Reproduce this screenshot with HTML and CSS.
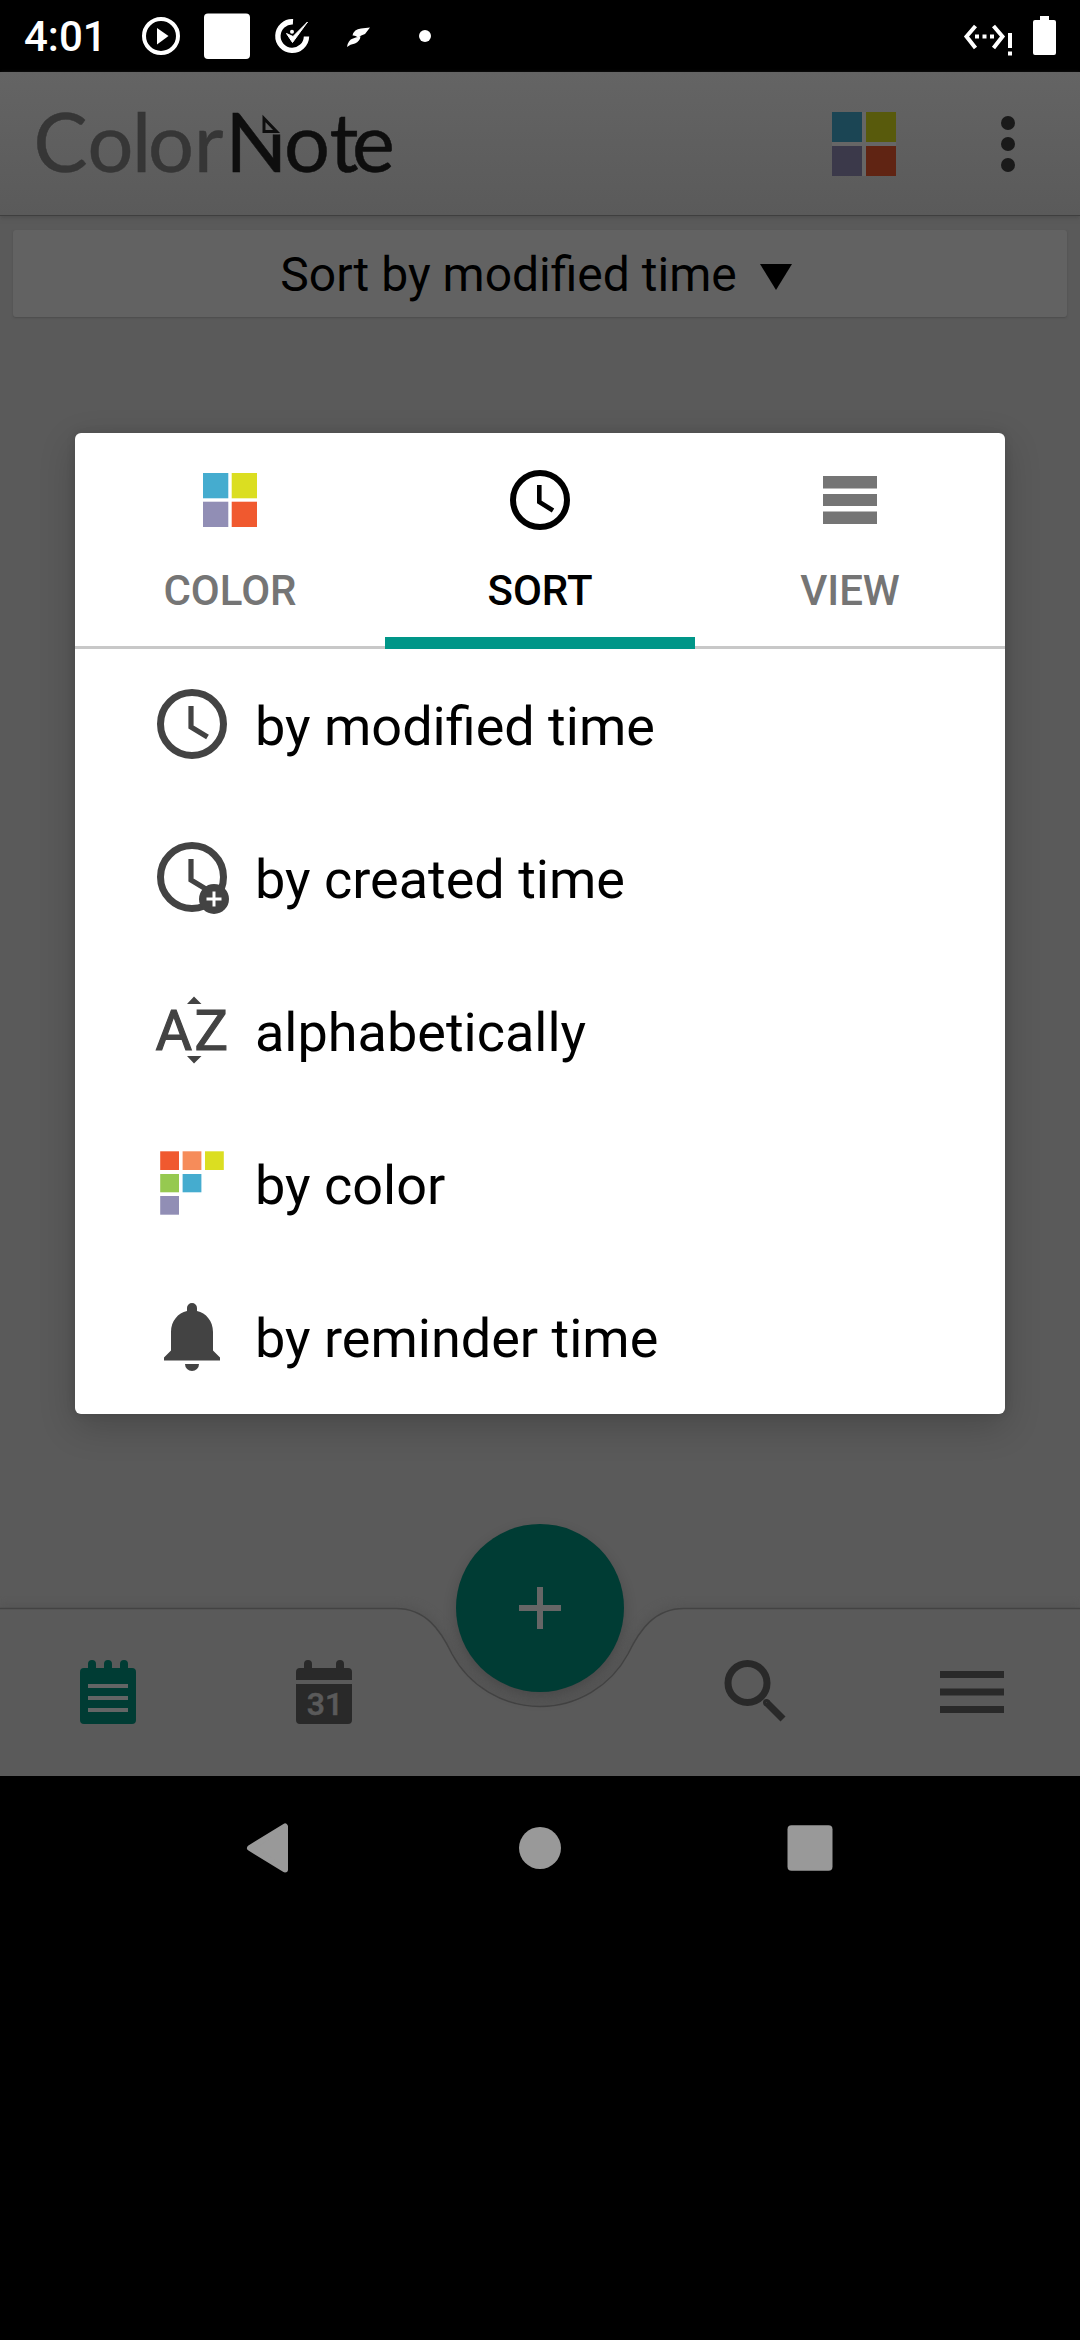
FILE: index.html
```html
<!DOCTYPE html>
<html lang="en">
<head>
<meta charset="utf-8">
<title>ColorNote</title>
<link rel="stylesheet" href="styles.css">
</head>
<body>
<div class="screen">
  <header class="status">
    <span class="clock">4:01</span>
    <svg class="status-left" width="296" height="72" viewBox="140 0 296 72">
      <circle cx="161" cy="36" r="17" fill="none" stroke="#fff" stroke-width="4"/>
      <path d="M157 28 L168.500 36 L157 44.500 Z" fill="#fff"/>
      <rect x="204" y="13.500" width="46" height="45.500" rx="4" fill="#fff"/>
      <path d="M293 21.800 A14.300 14.300 0 1 0 306.500 36.500" fill="none" stroke="#fff" stroke-width="5.400" stroke-linecap="butt"/>
      <path d="M286.500 33.500 L292.500 42.500 L307.500 22 L293 36.500 Z" fill="#fff" stroke="#fff" stroke-width="1"/>
      <circle cx="292" cy="31.700" r="2" fill="#fff"/>
      <path d="M352.500 35.500 Q354 29 361 28.500 L370 27.500 L365 34 Q361 35 358 37.500 Q355 35 352.500 35.500 Z M347 47 Q348 40 353 38.500 Q356 37 360.500 36.500 Q360 41 355 43.500 Q350 44 347 47 Z" fill="#fff"/>
      <circle cx="425" cy="36" r="6" fill="#fff"/>
    </svg>
    <svg class="status-right" width="96" height="72" viewBox="962 0 96 72">
      <path d="M975.500 26 L966.500 36.500 L975.500 48 M993.500 26 L1002.500 36.500 L993.500 48" fill="none" stroke="#fff" stroke-width="4"/>
      <path d="M975 34.500h4v4h-4z M982.500 34.500h4v4h-4z M990 34.500h4v4h-4z M1008 33h4v15h-4z M1008 51.500h4v4h-4z" fill="#fff"/>
      <path d="M1040 16 h9 v4 h5 q2 0 2 2 v31 q0 2 -2 2 h-19 q-2 0 -2 -2 v-31 q0 -2 2 -2 h5 Z" fill="#fff"/>
    </svg>
  </header>

  <main class="app">
    <div class="appbar">
      <svg class="logo" width="390" height="130" viewBox="22 79 390 130">
        <defs>
          <clipPath id="stem"><path d="M220 79 H262 V134.500 H300 V209 H220 Z"/></clipPath>
        </defs>
        <text class="logo-light" x="33.500 87.500 132 148 194" y="172">Color</text>
        <text class="logo-dark" x="225.500" y="172" clip-path="url(#stem)">N</text>
        <text class="logo-dark" x="284 329.500 352" y="172">ote</text>
        <path d="M264 118.500 V131.500 H276.500 Z" fill="none" stroke="#0e0e0e" stroke-width="3"/>
      </svg>
      <svg class="palette" width="64" height="64" viewBox="0 0 64 64">
        <rect width="64" height="64" fill="#666"/>
        <rect width="30" height="30" fill="#1b4554"/>
        <rect x="34" width="30" height="30" fill="#585a0c"/>
        <rect y="34" width="30" height="30" fill="#3b394a"/>
        <rect x="34" y="34" width="30" height="30" fill="#602413"/>
      </svg>
      <svg class="more" width="16" height="60" viewBox="0 0 16 60" fill="#1a1a1a">
        <circle cx="8" cy="9" r="7"/><circle cx="8" cy="30" r="7"/><circle cx="8" cy="51" r="7"/>
      </svg>
    </div>

    <div class="sortbar">
      <span>Sort by modified time</span>
      <svg width="32" height="26" viewBox="0 0 32 26"><path d="M0 0 H32 L16 26 Z"/></svg>
    </div>

    <nav class="bottombar">
      <svg class="notch" width="1080" height="180" viewBox="0 0 1080 180">
        <path class="notch-glow" d="M0 12.500 H396 C425 12.500 440 33 452 58 A100 100 0 0 0 628 58 C640 33 655 12.500 684 12.500 H1080"/>
        <path class="notch-fill" d="M0 12.500 H396 C425 12.500 440 33 452 58 A100 100 0 0 0 628 58 C640 33 655 12.500 684 12.500 H1080 V180 H0 Z"/>
        <path class="notch-line" d="M0 12.500 H396 C425 12.500 440 33 452 58 A100 100 0 0 0 628 58 C640 33 655 12.500 684 12.500 H1080"/>
      </svg>
      <svg width="56" height="64" viewBox="0 0 56 64">
        <path d="M8 8 V4 a4 4 0 0 1 8 0 V8 H24 V4 a4 4 0 0 1 8 0 V8 H40 V4 a4 4 0 0 1 8 0 V8 H52 a4 4 0 0 1 4 4 V60 a4 4 0 0 1 -4 4 H4 a4 4 0 0 1 -4 -4 V12 a4 4 0 0 1 4 -4 Z" fill="#003c34"/>
        <path d="M8 24h40v4H8z M8 36h40v4H8z M8 48h40v4H8z" fill="#636565"/>
      </svg>
      <svg width="56" height="64" viewBox="0 0 56 64">
        <path d="M8 8 V4 a4 4 0 0 1 8 0 V8 H40 V4 a4 4 0 0 1 8 0 V8 H52 a4 4 0 0 1 4 4 V20 H0 V12 a4 4 0 0 1 4 -4 Z M0 24 H56 V60 a4 4 0 0 1 -4 4 H4 a4 4 0 0 1 -4 -4 Z" fill="#292929"/>
        <text class="day" x="29" y="55">31</text>
      </svg>
      <div class="fab">
        <svg width="42" height="42" viewBox="0 0 42 42"><path d="M18 0h6v18h18v6H24v18h-6V24H0v-6h18z" fill="#666"/></svg>
      </div>
      <svg width="64" height="64" viewBox="0 0 64 64" fill="none" stroke="#292929">
        <circle cx="23.500" cy="23" r="19.500" stroke-width="7"/>
        <path d="M42.500 42.500 L59 59" stroke-width="7"/>
        <circle cx="42.500" cy="42.500" r="1.500" stroke-width="4"/>
      </svg>
      <svg width="64" height="64" viewBox="0 0 64 64"><path d="M0 11h64v7H0z M0 28.500h64v7H0z M0 46h64v7H0z" fill="#292929"/></svg>
    </nav>

    <section class="dialog">
      <div class="tabs">
        <div class="tab">
          <svg width="60" height="60" viewBox="0 0 60 60">
            <path d="M3 3h25.300v25.300H3z" fill="#45accf"/><path d="M31.700 3H57v25.300H31.700z" fill="#dbde21"/>
            <path d="M3 31.700h25.300V57H3z" fill="#918eb5"/><path d="M31.700 31.700H57V57H31.700z" fill="#f0592f"/>
          </svg>
          <span>COLOR</span>
        </div>
        <div class="tab active">
          <svg width="60" height="60" viewBox="0 0 60 60" fill="none" stroke="#000">
            <circle cx="30" cy="30" r="27" stroke-width="6"/>
            <path d="M29.300 15 V32 L43 40.500" stroke-width="4.600"/>
          </svg>
          <span>SORT</span>
        </div>
        <div class="tab">
          <svg width="60" height="60" viewBox="0 0 60 60"><path d="M3 6h54v12.500H3z M3 24h54v12H3z M3 41.500h54V54H3z" fill="#757575"/></svg>
          <span>VIEW</span>
        </div>
      </div>
      <ul class="options">
        <li>
          <svg width="76" height="76" viewBox="0 0 76 76" fill="none" stroke="#434343">
            <circle cx="38" cy="38" r="31.500" stroke-width="7"/><path d="M37 20 V41 L53.500 51" stroke-width="5.200"/>
          </svg>
          <span>by modified time</span>
        </li>
        <li>
          <svg width="76" height="76" viewBox="0 0 76 76" fill="none" stroke="#434343">
            <circle cx="38" cy="38" r="31.500" stroke-width="7"/><path d="M37 20 V41 L53.500 51" stroke-width="5.200"/>
            <circle cx="60" cy="60" r="15" fill="#434343" stroke="none"/>
            <path d="M60 52.500 V67.500 M52.500 60 H67.500" stroke="#fff" stroke-width="3"/>
          </svg>
          <span>by created time</span>
        </li>
        <li>
          <svg width="76" height="76" viewBox="0 0 76 76" fill="#434343">
            <path d="M33 12 L40 4.500 L47.500 12 Z M33 64 H47.500 L40 71.500 Z"/>
            <text class="az" x="1.500 40.500" y="58">AZ</text>
          </svg>
          <span>alphabetically</span>
        </li>
        <li>
          <svg width="76" height="76" viewBox="0 0 76 76">
            <path d="M6.200 6.300h18.800v18.700H6.200z" fill="#f0592f"/><path d="M28.600 6.300h18.800v18.700H28.600z" fill="#f68c5a"/><path d="M51 6.300h18.800v18.700H51z" fill="#dbde21"/>
            <path d="M6.200 29h18.800v18.300H6.200z" fill="#96c950"/><path d="M28.600 29h18.800v18.300H28.600z" fill="#45accf"/>
            <path d="M6.200 51h18.800v18.700H6.200z" fill="#918eb5"/>
          </svg>
          <span>by color</span>
        </li>
        <li>
          <svg width="76" height="76" viewBox="0 0 76 76" fill="#434343">
            <path d="M33 13 V10 a5 5 0 0 1 10 0 V13 C52 15 59 23 59 34 V52.500 L66 59.500 V62.500 H10 V59.500 L17 52.500 V34 C17 23 24 15 33 13 Z"/>
            <path d="M31 66 H45 A7 7 0 0 1 31 66 Z"/>
          </svg>
          <span>by reminder time</span>
        </li>
      </ul>
    </section>
  </main>

  <footer class="sysnav">
    <svg width="46" height="50" viewBox="0 0 46 50"><path d="M4 25 L39 3.500 V46.500 Z" fill="#999" stroke="#999" stroke-width="6" stroke-linejoin="round"/></svg>
    <svg width="46" height="50" viewBox="0 0 46 50"><circle cx="23" cy="25" r="21" fill="#999"/></svg>
    <svg width="46" height="50" viewBox="0 0 46 50"><rect x="0.500" y="2.200" width="45" height="45.600" rx="4" fill="#999"/></svg>
  </footer>
</div>
</body>
</html>
```
FILE: styles.css
```css
* { box-sizing: border-box; }
body { margin: 0; background: #000; font-family: Roboto, "Liberation Sans", sans-serif; }
svg { display: block; flex: none; }
.screen { width: 1080px; height: 2340px; display: flex; flex-direction: column; background: #000; overflow: hidden; }

.status { height: 72px; flex: none; display: flex; align-items: center; padding: 0 22px 0 24px; color: #fff; }
.clock { width: 116px; font-size: 42px; font-weight: 500; line-height: 72px; padding-top: 2px; }
.status-right { margin-left: auto; }

.app { position: relative; height: 1704px; flex: none; display: flex; flex-direction: column; background: #5a5a5a; }

.appbar { height: 144px; flex: none; display: flex; align-items: center; padding: 0 64px 0 22px; background: linear-gradient(#646464, #5a5a5a); border-bottom: 1px solid #3f3f3f; box-shadow: 0 2px 4px #4f4f4f; }
.logo { margin-right: 420px; }
.logo-light, .logo-dark { font-family: Lato, sans-serif; font-size: 81px; stroke-width: .5; }
.logo-light { fill: #363636; stroke: #363636; }
.logo-dark { fill: #0e0e0e; stroke: #0e0e0e; }
.more { margin-left: auto; }

.sortbar { margin: 14px 13px 0; height: 87px; flex: none; display: flex; align-items: center; justify-content: center; gap: 23px; background: #626262; border-radius: 3px; box-shadow: 0 1px 2px #4c4c4c; font-size: 48px; color: #000; }
.sortbar span { padding-top: 2px; }
.sortbar svg { margin-top: 6px; margin-right: 8px; }

.bottombar { position: relative; margin-top: auto; height: 168px; flex: none; display: grid; grid-template-columns: repeat(5, 1fr); align-items: center; justify-items: center; }
.notch { position: absolute; left: 0; bottom: 0; }
.bottombar > svg:not(.notch) { position: relative; }
.notch-fill { fill: #5a5a5a; }
.notch-line { fill: none; stroke: #434343; stroke-width: 1.4; }
.notch-glow { fill: none; stroke: #545454; stroke-width: 8; filter: blur(4px); }
.day { font-size: 32px; font-weight: 500; text-anchor: middle; fill: #5a5a5a; stroke: #5a5a5a; stroke-width: .6; }
.fab { position: relative; top: -84px; width: 168px; height: 168px; border-radius: 50%; background: #003c34; display: flex; align-items: center; justify-content: center; box-shadow: 0 6px 14px rgba(0, 0, 0, .2); }

.dialog { position: absolute; left: 75px; top: 361px; width: 930px; height: 981px; display: flex; flex-direction: column; background: #fff; border-radius: 6px; box-shadow: 0 12px 36px rgba(0, 0, 0, .2), 0 0 10px rgba(0, 0, 0, .1); }
.tabs { height: 216px; flex: none; display: grid; grid-template-columns: repeat(3, 1fr); box-shadow: inset 0 -3px #c8c8c8; }
.tab { display: flex; flex-direction: column; align-items: center; padding-top: 37px; gap: 36px; font-size: 42px; font-weight: 500; line-height: 49px; color: #757575; }
.active { color: #000; border-bottom: 12px solid #009688; }
.options { list-style: none; margin: 0; padding: 0; flex: 1; display: flex; flex-direction: column; }
.options li { flex: 1; display: flex; align-items: center; gap: 25px; padding-left: 79px; font-size: 54px; color: #000; }
.options li svg { margin-bottom: 3px; }
.options li span { padding-top: 2px; }
.az { font-size: 56px; font-weight: 400; stroke: #434343; stroke-width: 1.2; }

.sysnav { height: 144px; flex: none; display: flex; justify-content: space-between; align-items: center; padding: 0 247px 0 246px; }
```
